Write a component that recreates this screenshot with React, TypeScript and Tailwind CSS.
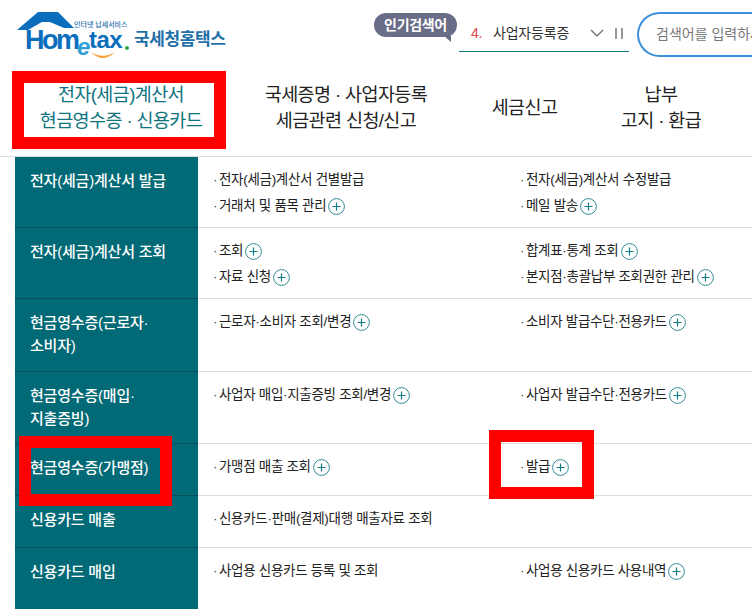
const font = "font-['Liberation_Sans','Noto_Sans_CJK_KR',sans-serif]";

type Item = { label: string; plus?: boolean };
type Row = { title: string[]; height: string; left: Item[]; right: Item[] };

const rows: Row[] = [
  {
    title: ["전자(세금)계산서 발급"],
    height: "h-[71px]",
    left: [{ label: "전자(세금)계산서 건별발급" }, { label: "거래처 및 품목 관리", plus: true }],
    right: [{ label: "전자(세금)계산서 수정발급" }, { label: "메일 발송", plus: true }],
  },
  {
    title: ["전자(세금)계산서 조회"],
    height: "h-[71px]",
    left: [{ label: "조회", plus: true }, { label: "자료 신청", plus: true }],
    right: [{ label: "합계표·통계 조회", plus: true }, { label: "본지점·총괄납부 조회권한 관리", plus: true }],
  },
  {
    title: ["현금영수증(근로자·", "소비자)"],
    height: "h-[73px]",
    left: [{ label: "근로자·소비자 조회/변경", plus: true }],
    right: [{ label: "소비자 발급수단·전용카드", plus: true }],
  },
  {
    title: ["현금영수증(매입·", "지출증빙)"],
    height: "h-[72px]",
    left: [{ label: "사업자 매입·지출증빙 조회/변경", plus: true }],
    right: [{ label: "사업자 발급수단·전용카드", plus: true }],
  },
  {
    title: ["현금영수증(가맹점)"],
    height: "h-[52px]",
    left: [{ label: "가맹점 매출 조회", plus: true }],
    right: [{ label: "발급", plus: true }],
  },
  {
    title: ["신용카드 매출"],
    height: "h-[52px]",
    left: [{ label: "신용카드·판매(결제)대행 매출자료 조회" }],
    right: [],
  },
  {
    title: ["신용카드 매입"],
    height: "h-[62px]",
    left: [{ label: "사업용 신용카드 등록 및 조회" }],
    right: [{ label: "사업용 신용카드 사용내역", plus: true }],
  },
];

function PlusIcon() {
  return (
    <svg width="17" height="17" viewBox="0 0 17 17" fill="none" className="ml-[2px] mt-[2px] shrink-0">
      <circle cx="8.5" cy="8.5" r="7.9" stroke="#2f8a94" strokeWidth="1" />
      <path d="M8.5 4.5v8M4.5 8.5h8" stroke="#0f7c85" strokeWidth="1.2" />
    </svg>
  );
}

function MenuItem({ item }: { item: Item }) {
  return (
    <div className="flex h-[26px] items-start whitespace-nowrap text-[13.5px] leading-[19px] tracking-[-0.3px] text-[#222]">
      <span className="w-[6px] text-[#444]">·</span>
      <span>{item.label}</span>
      {item.plus && <PlusIcon />}
    </div>
  );
}

function Logo() {
  return (
    <div className="relative h-[62px] w-[374px] shrink-0">
      <svg width="130" height="62" viewBox="0 0 130 62" fill="none" className="absolute left-0 top-0">
        <path d="M17 30 L38 12 H58 L74 28 H64 L50 22 H42 L28 30 Z" fill="#0a6ebd" />
        <path d="M91 52 C99 60 107 60 115 52 C107 57 99 57 91 52 Z" fill="#f2a33a" />
        <circle cx="127" cy="48" r="2" fill="#2aa84a" />
      </svg>
      <span className="absolute left-[25px] top-[29px] text-[27px] font-bold leading-[22px] tracking-[-2.5px] text-[#0a6ebd]">
        Hom
      </span>
      <span className="absolute left-[77px] top-[37px] text-[24px] font-bold italic leading-[20px] text-[#2f9fd8]">
        e
      </span>
      <span className="absolute left-[89px] top-[30px] text-[24px] font-bold leading-[20px] tracking-[-0.5px] text-[#0a6ebd]">
        tax
      </span>
      <span className="absolute left-[74px] top-[21px] text-[7px] font-medium leading-[8px] text-[#2c6fae]">
        인터넷 납세서비스
      </span>
      <span className="absolute left-[134px] top-[29px] text-[17px] font-semibold leading-[22px] tracking-[-0.4px] text-[#1f6fa8]">
        국세청홈택스
      </span>
    </div>
  );
}

function SearchBar() {
  return (
    <div className="flex flex-1 items-start">
      <div className="relative mt-[13px] flex h-[24px] w-[83px] shrink-0 items-center justify-center rounded-[12px] bg-[#6a6d88] text-[14px] font-semibold tracking-[-0.3px] text-white">
        인기검색어
        <span className="absolute bottom-[-5px] right-[6px] h-0 w-0 border-l-[7px] border-t-[6px] border-l-transparent border-t-[#6a6d88]" />
      </div>
      <div className="ml-[2px] mt-[20px] flex h-[32px] w-[170px] shrink-0 items-center border-b border-[#0f7c85] pb-[5px] pl-[12px] text-[14px] tracking-[-0.2px] text-[#333]">
        <span className="w-[22px] text-[#e8404a]">4.</span>
        <span>사업자등록증</span>
        <svg width="14" height="8" viewBox="0 0 14 8" fill="none" className="ml-[21px]">
          <path d="M1 1l6 6 6-6" stroke="#666" strokeWidth="1.2" />
        </svg>
        <span className="ml-[11px] h-[11px] w-[8px] border-x-2 border-[#999]" />
      </div>
      <div className="ml-[8px] mt-[12px] flex h-[45px] w-[200px] shrink-0 items-center rounded-l-[23px] border-y-2 border-l-2 border-[#3b90dc] pb-[1px] pl-[17px] text-[14px] whitespace-nowrap text-[#777]">
        검색어를 입력하세요
      </div>
    </div>
  );
}

function TopTabs() {
  return (
    <div className="relative flex h-[95px] border-b border-[#ddd] text-center text-[18.5px] leading-[26px] tracking-[-0.6px] text-[#222]">
      <div className="w-[226px] shrink-0 pl-[16px] pt-[20px] text-[#0f7480]">
        <p>전자(세금)계산서</p>
        <p>현금영수증 · 신용카드</p>
      </div>
      <div className="w-[230px] shrink-0 pl-[10px] pt-[20px]">
        <p>국세증명 · 사업자등록</p>
        <p>세금관련 신청/신고</p>
      </div>
      <div className="w-[137px] shrink-0 pt-[33px]">세금신고</div>
      <div className="w-[136px] shrink-0 pt-[20px]">
        <p>납부</p>
        <p>고지 · 환급</p>
      </div>
      {/* 빨간 강조 박스 */}
      <span className="absolute left-[12px] top-[9px] h-[78px] w-[214px] border-[12px] border-[#ff0000]" />
    </div>
  );
}

export default function App() {
  return (
    <div className={`relative h-[609px] w-[752px] overflow-hidden bg-white ${font}`}>
      <div className="flex h-[62px]">
        <Logo />
        <SearchBar />
      </div>
      <TopTabs />
      <div className="ml-[15px]">
        {rows.map((row) => (
          <div key={row.title[0]} className={`flex ${row.height}`}>
            <div className="w-[183px] shrink-0 border-b border-[#0a4f58] bg-[#026976] pl-[15px] pt-[12px] text-[15px] font-medium leading-[23px] tracking-[-0.2px] text-white">
              {row.title.map((line) => (
                <p key={line}>{line}</p>
              ))}
            </div>
            <div className="flex flex-1 border-b border-[#ddd] pt-[13px]">
              <div className="w-[307px] shrink-0 pl-[15px]">
                {row.left.map((item) => (
                  <MenuItem key={item.label} item={item} />
                ))}
              </div>
              <div className="flex-1 pl-[15px]">
                {row.right.map((item) => (
                  <MenuItem key={item.label} item={item} />
                ))}
              </div>
            </div>
          </div>
        ))}
      </div>
      {/* 빨간 강조 박스 */}
      <span className="absolute left-[19px] top-[436px] h-[70px] w-[153px] border-[12px] border-[#ff0000]" />
      <span className="absolute left-[489px] top-[430px] h-[69px] w-[105px] border-[12px] border-[#ff0000]" />
    </div>
  );
}
